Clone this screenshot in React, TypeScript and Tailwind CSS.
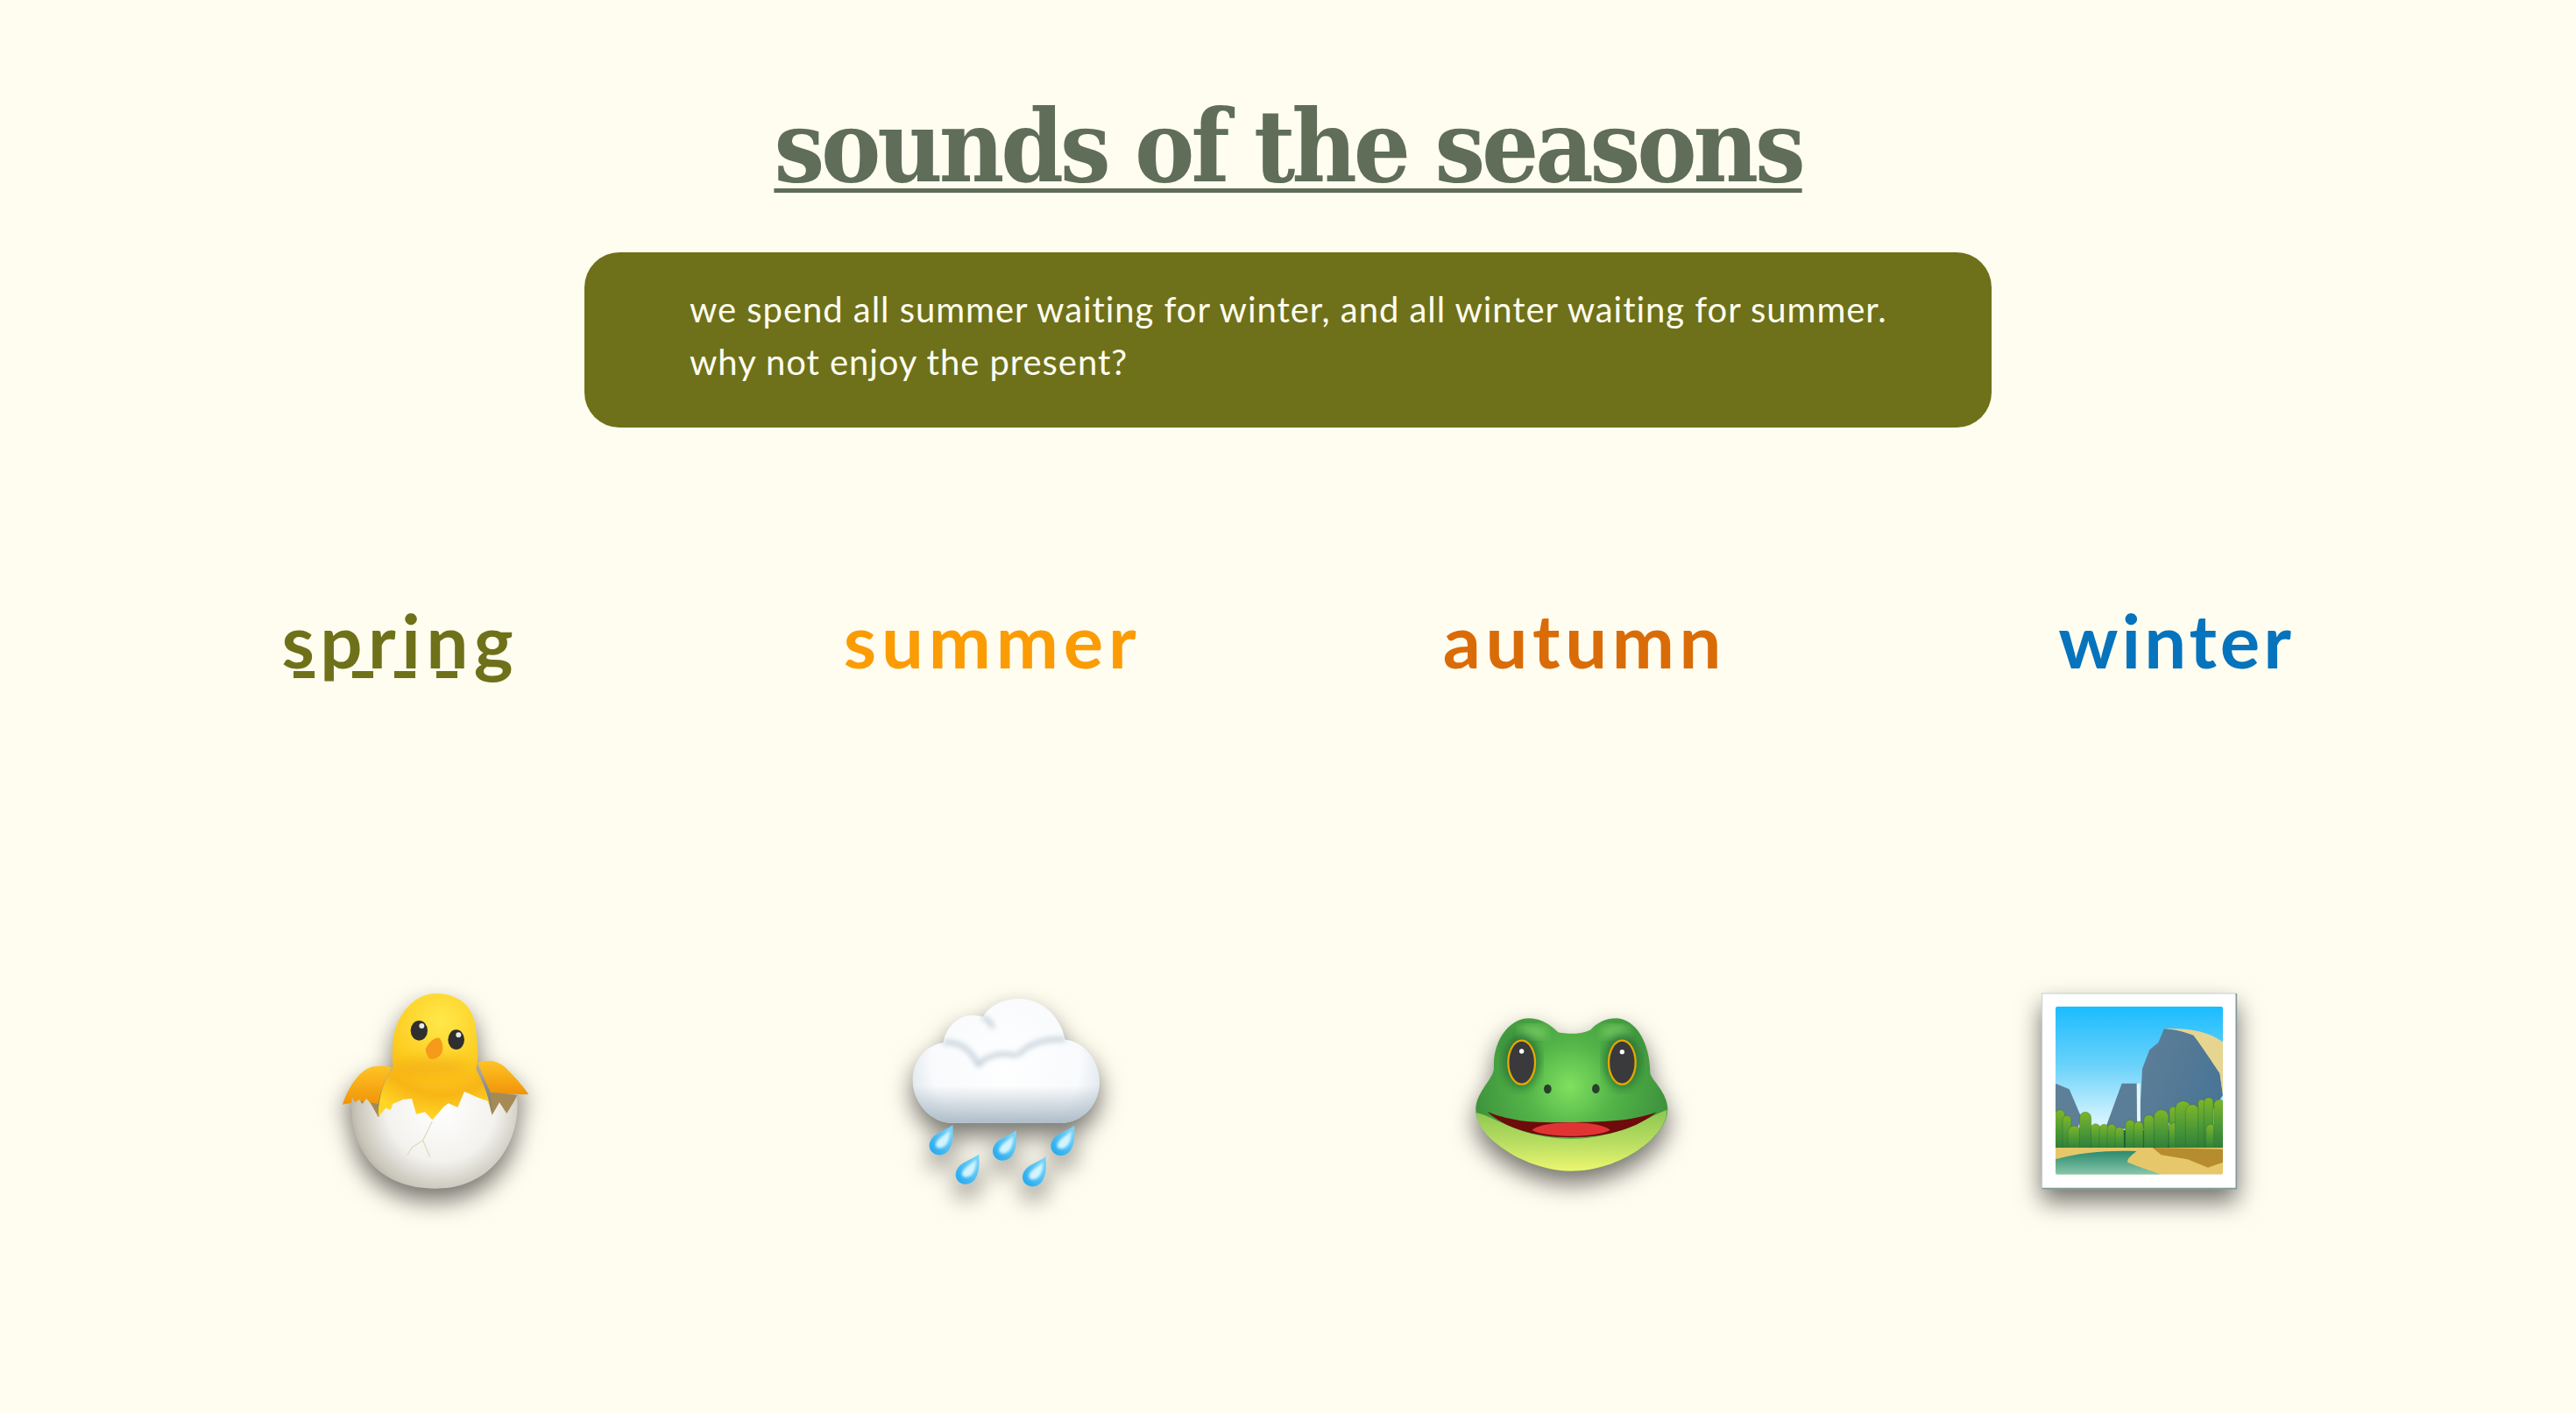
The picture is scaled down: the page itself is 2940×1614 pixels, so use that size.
const DROPS = [
  [190, 588],
  [407, 607],
  [606, 590],
  [280, 688],
  [509, 696],
]

const TREES = [
  [183, 470, 34],
  [207, 490, 30],
  [232, 525, 44],
  [270, 478, 40],
  [305, 518, 32],
  [334, 520, 32],
  [360, 520, 30],
  [387, 530, 30],
  [423, 505, 32],
  [452, 510, 32],
  [488, 488, 36],
  [530, 470, 50],
  [570, 460, 24],
  [572, 515, 32],
  [605, 440, 54],
  [636, 452, 46],
  [668, 435, 24],
  [692, 428, 32],
  [700, 520, 34],
  [728, 435, 36],
]

const DASHES = ['left-[14px]', 'left-[81px]', 'left-[129px]', 'left-[177px]']

const shadow = 'drop-shadow-[0_14px_14px_rgba(0,0,0,0.55)]'

function ChickEmoji() {
  return (
    <svg viewBox="-39 0 900 900" className={`h-[300px] w-[300px] ${shadow}`}>
      <defs>
        <radialGradient id="chickBody" gradientUnits="userSpaceOnUse" cx="430" cy="165" r="340">
          <stop offset="0" stopColor="#ffe84a" />
          <stop offset="0.5" stopColor="#fdcd20" />
          <stop offset="0.75" stopColor="#f8b516" />
          <stop offset="1" stopColor="#ffd626" />
        </radialGradient>
        <linearGradient id="chickWing" x1="0" y1="0" x2="0" y2="1">
          <stop offset="0" stopColor="#ffc425" />
          <stop offset="1" stopColor="#f09408" />
        </linearGradient>
        <radialGradient id="chickEgg" gradientUnits="userSpaceOnUse" cx="430" cy="460" r="340">
          <stop offset="0" stopColor="#ffffff" />
          <stop offset="0.55" stopColor="#f3f2ee" />
          <stop offset="0.85" stopColor="#c9c6ba" />
          <stop offset="1" stopColor="#a8a392" />
        </radialGradient>
        <filter id="chickSoft" x="-50%" y="-150%" width="200%" height="400%">
          <feGaussianBlur stdDeviation="22" />
        </filter>
      </defs>
      <path d="M135 430 L215 430 L215 500 L170 480 Z" fill="#a58a55" />
      <path d="M600 412 L690 420 L660 490 L605 490 Z" fill="#a58a55" />
      <path
        d="M93 452 C110 400 150 330 200 322 C225 318 250 322 262 325 C240 360 225 400 215 450 L160 440 Z"
        fill="url(#chickWing)"
      />
      <path
        d="M555 310 C590 295 630 300 660 335 C690 365 715 395 730 417 C680 420 630 410 600 412 Z"
        fill="url(#chickWing)"
      />
      <path
        d="M415 72 C500 72 548 130 550 200 C556 260 560 300 550 330 C570 370 595 420 603 490 L400 510 L215 490 C215 420 240 360 265 325 C262 280 262 230 275 190 C300 120 350 72 415 72 Z"
        fill="url(#chickBody)"
      />
      <ellipse cx="400" cy="325" rx="125" ry="26" fill="#ee9a10" opacity="0.55" filter="url(#chickSoft)" />
      <path
        d="M125 425 L135 445 L150 435 L160 450 L175 432 L190 450 L215 495 L240 465 L258 470 L265 450 L300 435 L330 432 L345 485 L375 478 L400 505 L440 460 L455 448 L487 462 L510 408 L560 430 L590 440 L605 488 L630 445 L655 483 L690 425 C705 560 620 740 410 740 C200 740 110 590 125 425 Z"
        fill="url(#chickEgg)"
      />
      <path d="M400 510 L385 540 L368 575 L330 600 L315 625 M368 575 L392 632" fill="none" stroke="#d8d0a8" strokeWidth="3" />
      <ellipse cx="355" cy="199" rx="29" ry="34" fill="#2f2f2f" />
      <ellipse cx="482" cy="230" rx="28" ry="34" fill="#2f2f2f" />
      <circle cx="364" cy="183" r="9" fill="#e8e8e8" />
      <circle cx="490" cy="214" r="9" fill="#e8e8e8" />
      <path
        d="M377 262 C390 235 410 220 425 225 C437 240 440 265 430 280 C420 295 400 300 390 295 C382 285 378 275 377 262 Z"
        fill="#f59a1a"
      />
    </svg>
  )
}

function CloudEmoji() {
  const outline =
    'M200 240 C210 180 260 145 300 147 C320 147 335 152 335 152 C360 110 410 90 460 90 C540 92 600 150 617 230 C680 235 735 300 735 375 C735 450 680 515 600 516 L220 515 C150 510 95 440 95 370 C95 300 140 250 200 240 Z'

  return (
    <svg viewBox="-45 0 900 900" className={`h-[300px] w-[300px] ${shadow}`}>
      <defs>
        <radialGradient id="cloudFill" gradientUnits="userSpaceOnUse" cx="415" cy="300" r="370">
          <stop offset="0" stopColor="#ffffff" />
          <stop offset="0.7" stopColor="#f8fafc" />
          <stop offset="0.9" stopColor="#e2e9ef" />
          <stop offset="1" stopColor="#c4d0da" />
        </radialGradient>
        <linearGradient id="cloudBase" x1="0" y1="0" x2="0" y2="1">
          <stop offset="0.7" stopColor="#aebdc9" stopOpacity="0" />
          <stop offset="1" stopColor="#aebdc9" />
        </linearGradient>
        <linearGradient id="dropFill" x1="0" y1="1" x2="1" y2="0">
          <stop offset="0" stopColor="#1ea6ee" />
          <stop offset="1" stopColor="#7fd8fa" />
        </linearGradient>
        <filter id="cloudSoft">
          <feGaussianBlur stdDeviation="9" />
        </filter>
        <filter id="dropSoft">
          <feGaussianBlur stdDeviation="5" />
        </filter>
      </defs>
      <path d={outline} fill="url(#cloudFill)" />
      <path d={outline} fill="url(#cloudBase)" />
      <path
        d="M200 240 C260 235 300 270 320 320 M320 320 C340 285 400 270 450 285 M455 285 C490 240 560 225 617 230 M335 152 C350 160 365 175 370 190"
        fill="none"
        stroke="#b4c3cf"
        strokeWidth="12"
        filter="url(#cloudSoft)"
      />
      {DROPS.map(([x, y]) => (
        <g key={`${x}-${y}`} transform={`translate(${x} ${y})`}>
          <path
            d="M42 -66 C44 -30 44 -5 30 18 C18 38 -12 44 -28 28 C-44 12 -40 -12 -22 -28 C-5 -42 22 -50 42 -66 Z"
            fill="url(#dropFill)"
          />
          <path
            d="M32 -48 C32 -25 30 -8 16 6 C6 16 -12 16 -16 6 C-18 -6 -8 -16 2 -24 C12 -32 22 -38 32 -48 Z"
            fill="#d2f4ff"
            filter="url(#dropSoft)"
          />
        </g>
      ))}
    </svg>
  )
}

function FrogEmoji() {
  return (
    <svg viewBox="-21 0 900 900" className={`h-[300px] w-[300px] ${shadow}`}>
      <defs>
        <radialGradient id="frogHead" gradientUnits="userSpaceOnUse" cx="425" cy="390" r="340">
          <stop offset="0" stopColor="#7fe060" />
          <stop offset="0.45" stopColor="#53b448" />
          <stop offset="1" stopColor="#3d913c" />
        </radialGradient>
        <linearGradient id="frogJaw" x1="0" y1="0" x2="0" y2="1">
          <stop offset="0" stopColor="#8cc650" />
          <stop offset="0.55" stopColor="#b9de62" />
          <stop offset="1" stopColor="#ecf670" />
        </linearGradient>
        <filter id="frogSoft">
          <feGaussianBlur stdDeviation="16" />
        </filter>
      </defs>
      <path
        d="M165 330 C160 230 220 157 285 157 C330 157 365 185 385 205 C420 212 460 212 495 197 C520 170 550 157 585 157 C650 160 700 240 700 345 C705 370 760 410 760 470 C760 560 600 680 430 680 C270 680 103 560 103 470 C103 410 160 370 165 330 Z"
        fill="url(#frogHead)"
      />
      <ellipse cx="300" cy="205" rx="50" ry="24" fill="#7ed066" opacity="0.8" filter="url(#frogSoft)" />
      <ellipse cx="580" cy="205" rx="50" ry="24" fill="#7ed066" opacity="0.8" filter="url(#frogSoft)" />
      <ellipse cx="260" cy="305" rx="62" ry="92" fill="#1f5e30" opacity="0.7" filter="url(#frogSoft)" />
      <ellipse cx="604" cy="305" rx="62" ry="92" fill="#1f5e30" opacity="0.7" filter="url(#frogSoft)" />
      <path
        d="M105 480 C160 490 260 570 430 570 C580 570 680 500 758 470 C760 560 600 680 430 680 C270 680 103 560 105 480 Z"
        fill="url(#frogJaw)"
      />
      <path
        d="M142 477 C250 520 340 513 430 513 C530 513 640 510 722 478 C660 530 560 565 430 565 C300 565 200 530 142 477 Z"
        fill="#6e0b0b"
      />
      <path d="M295 540 C330 505 530 505 563 540 C520 567 340 567 295 540 Z" fill="#e03434" />
      <ellipse cx="260" cy="308" rx="46" ry="75" fill="#3a3a3c" stroke="#e6a800" strokeWidth="7" />
      <ellipse cx="604" cy="308" rx="46" ry="75" fill="#3a3a3c" stroke="#e6a800" strokeWidth="7" />
      <circle cx="260" cy="270" r="8" fill="#ffffff" />
      <circle cx="604" cy="272" r="8" fill="#ffffff" />
      <ellipse cx="349" cy="399" rx="13" ry="16" fill="#26412a" />
      <ellipse cx="514" cy="398" rx="13" ry="16" fill="#26412a" />
    </svg>
  )
}

function PictureEmoji() {
  return (
    <svg viewBox="3 0 900 900" className={`h-[300px] w-[300px] ${shadow}`}>
      <defs>
        <linearGradient id="picSky" x1="0" y1="0" x2="0" y2="1">
          <stop offset="0" stopColor="#1bbcff" />
          <stop offset="0.35" stopColor="#6ad2fa" />
          <stop offset="0.7" stopColor="#dcf6ff" />
        </linearGradient>
        <linearGradient id="picRock" x1="0" y1="0" x2="1" y2="0.4">
          <stop offset="0" stopColor="#5f7f97" />
          <stop offset="1" stopColor="#4b7596" />
        </linearGradient>
        <linearGradient id="picTree" x1="0" y1="0" x2="0" y2="1">
          <stop offset="0" stopColor="#7fb52a" />
          <stop offset="0.5" stopColor="#4d9a36" />
          <stop offset="1" stopColor="#2b7a3a" />
        </linearGradient>
        <linearGradient id="picWater" x1="0" y1="0" x2="0" y2="1">
          <stop offset="0" stopColor="#2a8a6e" />
          <stop offset="1" stopColor="#88c6aa" />
        </linearGradient>
        <clipPath id="picClip">
          <rect x="168" y="117" width="573" height="575" rx="6" />
        </clipPath>
        <filter id="picSoft">
          <feGaussianBlur stdDeviation="1.5" />
        </filter>
      </defs>
      <rect x="122" y="72" width="665" height="668" fill="#ffffff" stroke="#c3d2d2" strokeWidth="3" />
      <path d="M787 72 L787 740 L122 740" fill="none" stroke="#7f9a9a" strokeWidth="5" />
      <g clipPath="url(#picClip)">
        <g filter="url(#picSoft)">
          <rect x="168" y="117" width="573" height="575" fill="url(#picSky)" />
          <path d="M168 380 L215 400 L258 500 L230 560 L168 560 Z" fill="#5d8098" />
          <path d="M340 530 L395 380 L447 380 L450 540 Z" fill="#5a7d98" />
          <path
            d="M455 510 L465 330 L490 265 L520 240 L540 192 L640 200 L730 340 L741 420 L700 480 L455 540 Z"
            fill="url(#picRock)"
          />
          <path
            d="M540 192 C620 190 690 200 741 238 L741 420 L730 345 C700 300 660 240 640 215 C600 200 570 195 540 192 Z"
            fill="#e5d590"
          />
          <path d="M446 380 L457 380 L459 510 L447 510 Z" fill="#e8f5f8" />
          <rect x="168" y="540" width="573" height="70" fill="#1f5f35" />
          {TREES.map(([x, top, w]) => (
            <rect
              key={`${x}-${top}`}
              x={x - w / 2}
              y={top}
              width={w}
              height={612 - top}
              rx={w / 2}
              fill="url(#picTree)"
              stroke="#1f5f35"
              strokeOpacity="0.5"
              strokeWidth="2"
            />
          ))}
          <rect x="168" y="600" width="573" height="92" fill="#e6c86a" />
          <path d="M500 600 L741 605 L741 650 L690 668 L620 640 L530 625 Z" fill="#b58d2e" />
          <path
            d="M168 640 C250 615 360 608 445 612 C430 625 410 640 415 650 C450 665 500 680 530 692 L168 692 Z"
            fill="url(#picWater)"
          />
        </g>
      </g>
    </svg>
  )
}

const SEASONS = [
  { name: 'spring', style: 'text-[#6e7119] tracking-[6.5px]' },
  { name: 'summer', style: 'text-[#fb9c04] tracking-[5.8px]' },
  { name: 'autumn', style: 'text-[#da6c08] tracking-[5.6px]' },
  { name: 'winter', style: 'text-[#0673bd] tracking-[4px]' },
]

export default function App() {
  return (
    <div className="flex min-h-screen flex-col items-center bg-[#fffdf0] font-['Lato',sans-serif]">
      <h1 className="mt-[101px] font-['DejaVu_Serif_Condensed','DejaVu_Serif',serif] text-[114px] leading-[132px] font-bold tracking-[-4.1px] text-[#5f6d59] underline decoration-[5px] underline-offset-[8px]">
        sounds of the seasons
      </h1>
      <div className="mt-[55px] h-[200px] w-[1606px] rounded-[40px] bg-[#6e7119] px-[120px] pt-[35px] text-[40px] leading-[60px] tracking-[0.95px] whitespace-nowrap text-[#fffdf0]">
        <p>we spend all summer waiting for winter, and all winter waiting for summer.</p>
        <p>why not enjoy the present?</p>
      </div>
      <div className="mt-[192px] grid w-full grid-cols-4 pr-[118px] pl-[119px]">
        {SEASONS.map((season) => (
          <h2 key={season.name} className={`text-center text-[85px] leading-[100px] font-bold ${season.style}`}>
            <span className="relative inline-block">
              {season.name}
              {season.name === 'spring' &&
                DASHES.map((left) => <i key={left} className={`absolute top-[86px] h-[8px] w-[24px] bg-[#6e7119] ${left}`} />)}
            </span>
          </h2>
        ))}
      </div>
      <div className="mt-[330px] grid w-full grid-cols-4 justify-items-center pr-[175px] pl-[173px]">
        <ChickEmoji />
        <CloudEmoji />
        <FrogEmoji />
        <PictureEmoji />
      </div>
    </div>
  )
}
